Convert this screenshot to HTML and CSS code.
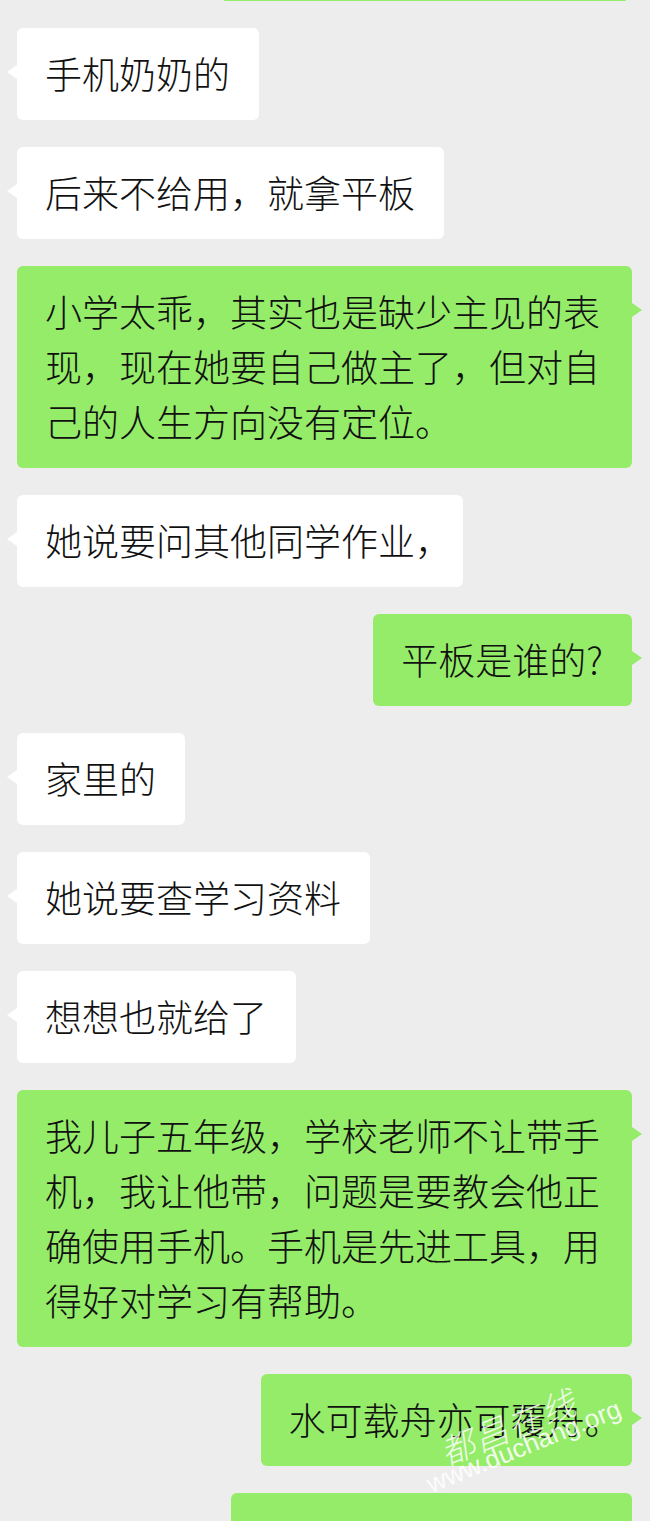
FILE: index.html
```html
<!DOCTYPE html>
<html lang="zh-CN">

<head>
    <meta charset="UTF-8">
    <meta name="viewport" content="width=device-width, initial-scale=1.0">
    <title>聊天记录</title>
    <link rel="stylesheet" href="styles.css">
</head>

<body>
    <div class="chat">
        <div class="row right">
            <div class="cut"></div>
        </div>

        <div class="row left">
            <div class="bubble">手机奶奶的</div>
        </div>
        <div class="row left">
            <div class="bubble">后来不给用，就拿平板</div>
        </div>
        <div class="row right">
            <div class="bubble">小学太乖，其实也是缺少主见的表现，现在她要自己做主了，但对自己的人生方向没有定位。</div>
        </div>
        <div class="row left">
            <div class="bubble">她说要问其他同学作业<span class="end">，</span></div>
        </div>
        <div class="row right">
            <div class="bubble">平板是谁的?</div>
        </div>
        <div class="row left">
            <div class="bubble">家里的</div>
        </div>
        <div class="row left">
            <div class="bubble">她说要查学习资料</div>
        </div>
        <div class="row left">
            <div class="bubble">想想也就给了</div>
        </div>
        <div class="row right">
            <div class="bubble">我儿子五年级，学校老师不让带手机，我让他带，问题是要教会他正确使用手机。手机是先进工具，用得好对学习有帮助。</div>
        </div>
        <div class="row right">
            <div class="bubble">水可载舟亦可覆舟<span class="end">。</span></div>
        </div>
        <div class="row right">
            <div class="bubble tall"></div>
        </div>

        <!-- watermark over the picture -->
        <div class="wm-name">都昌在线</div>
        <div class="wm-url">www.duchang.org</div>
    </div>
</body>

</html>
```

FILE: styles.css
```css
* {
    margin: 0;
    padding: 0;
    box-sizing: border-box;
}

body {
    background: #ededed;
    font-family: "Noto Sans CJK SC", "Noto Sans", sans-serif;
    font-weight: 300;
    color: #111;
    overflow: hidden;
}

.chat {
    position: relative;
    height: 1521px;
    padding: 0 18px 0 17px;
    display: flex;
    flex-direction: column;
    gap: 27px;
}

.row {
    display: flex;
}

.row.left {
    justify-content: flex-start;
}

.row.right {
    justify-content: flex-end;
}

.cut {
    width: 402px;
    height: 1px;
    margin-right: 6px;
    background: #95ec69;
    border-radius: 0 0 4px 4px;
}

.bubble {
    position: relative;
    max-width: 615px;
    padding: 18px 29px 19px 28px;
    font-size: 37px;
    line-height: 55px;
    border-radius: 6px;
    background: #fff;
}

.right .bubble {
    background: #95ec69;
}

.bubble::before {
    content: "";
    position: absolute;
    top: 37px;
    border-top: 7px solid transparent;
    border-bottom: 7px solid transparent;
}

.left .bubble::before {
    left: -10px;
    border-right: 10px solid #fff;
}

.right .bubble::before {
    right: -10px;
    border-left: 10px solid #95ec69;
}

.bubble.tall {
    width: 401px;
    height: 92px;
}

.end {
    font-feature-settings: "halt";
}

.wm-name {
    position: absolute;
    left: 447px;
    top: 1434px;
    font-family: "Noto Sans CJK SC", serif;
    font-size: 34px;
    font-weight: 300;
    line-height: 36px;
    letter-spacing: 2px;
    color: rgba(255, 255, 255, 0.85);
    transform-origin: 0 36px;
    transform: rotate(-22deg) skewX(-14deg);
}

.wm-url {
    position: absolute;
    left: 432px;
    top: 1472px;
    font-family: "Liberation Sans", Arial, sans-serif;
    font-size: 26px;
    font-weight: 400;
    line-height: 24px;
    color: rgba(255, 255, 255, 0.9);
    transform-origin: 0 23px;
    transform: rotate(-22deg);
}
```
